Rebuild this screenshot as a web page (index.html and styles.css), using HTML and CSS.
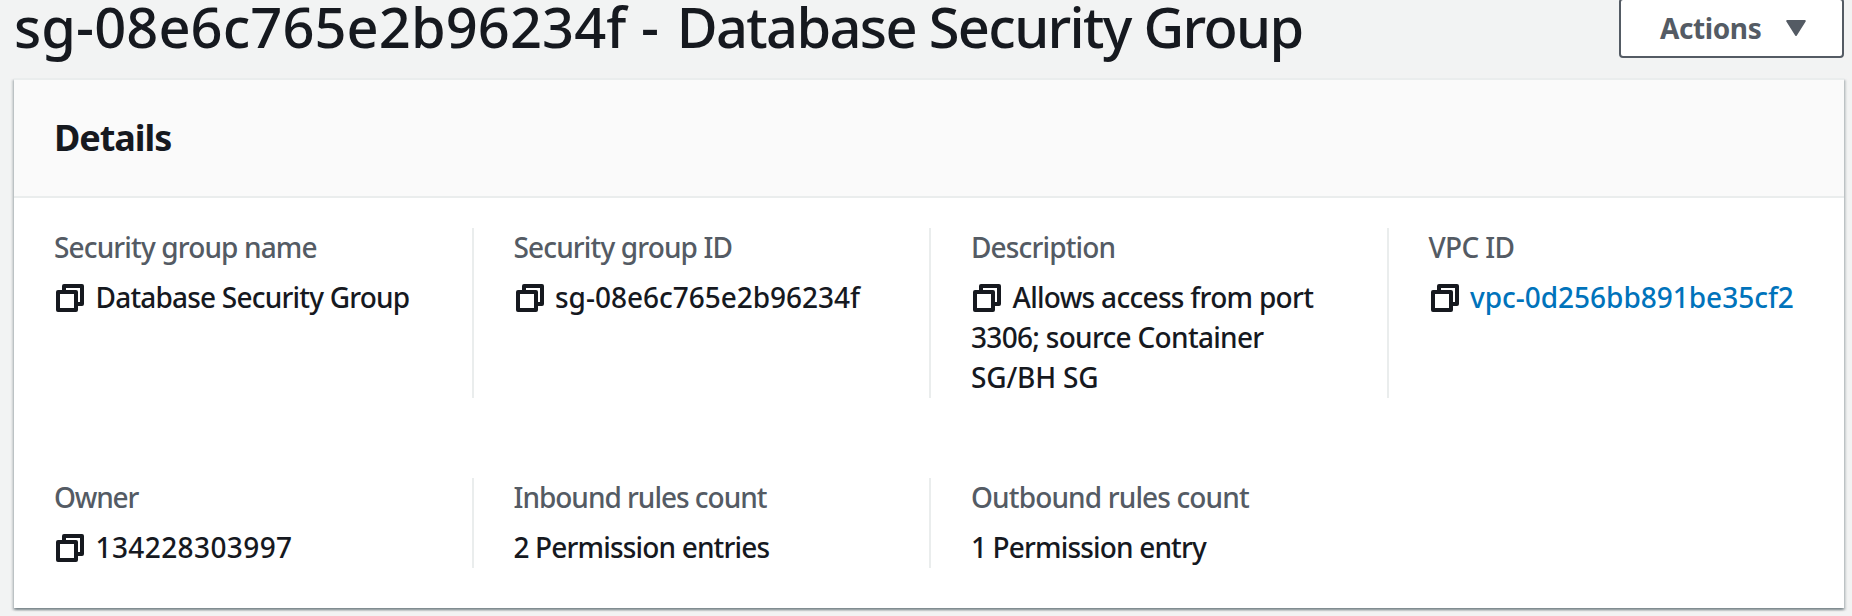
FILE: index.html
```html
<!DOCTYPE html>
<html lang="en">
<head>
<meta charset="utf-8">
<title>Database Security Group</title>
<link rel="stylesheet" href="styles.css">
</head>
<body>
<svg class="defs" width="0" height="0" aria-hidden="true">
  <symbol id="copy" viewBox="0 0 28 28">
    <path d="M8 6V2H26V20H22" fill="none" stroke="currentColor" stroke-width="4" stroke-linejoin="round"/>
    <rect x="2" y="8" width="18" height="18" fill="none" stroke="currentColor" stroke-width="4" stroke-linejoin="round"/>
  </symbol>
</svg>
<header class="top">
  <h1 class="title"><span class="title-id">sg-08e6c765e2b96234f - </span><span class="title-name">Database Security Group</span></h1>
  <button class="actions" type="button"><span>Actions</span><svg class="caret" width="20" height="16" viewBox="0 0 20 16"><path d="M1.2 1H18.8L10 15Z" fill="currentColor" stroke="currentColor" stroke-width="2" stroke-linejoin="round"/></svg></button>
</header>
<main class="card">
  <div class="card-head"><h2 class="card-title">Details</h2></div>
  <div class="fields">
    <div class="field"><div class="label">Security group name</div><div class="value t-name"><svg class="icon"><use href="#copy"/></svg>Database Security Group</div></div>
    <div class="field"><div class="label">Security group ID</div><div class="value t-id"><svg class="icon"><use href="#copy"/></svg>sg-08e6c765e2b96234f</div></div>
    <div class="field"><div class="label">Description</div><div class="value t-desc"><svg class="icon"><use href="#copy"/></svg>Allows access from port 3306; source Container <span class="t-caps">SG/BH SG</span></div></div>
    <div class="field"><div class="label t-vpc">VPC ID</div><div class="value t-id"><svg class="icon"><use href="#copy"/></svg><a class="link">vpc-0d256bb891be35cf2</a></div></div>
    <div class="field"><div class="label t-owner">Owner</div><div class="value t-num"><svg class="icon"><use href="#copy"/></svg>134228303997</div></div>
    <div class="field"><div class="label t-inbound">Inbound rules count</div><div class="value t-count">2 Permission entries</div></div>
    <div class="field"><div class="label">Outbound rules count</div><div class="value t-count">1 Permission entry</div></div>
  </div>
</main>
</body>
</html>
```
FILE: styles.css
```css
* { box-sizing: border-box; }
body {
  margin: 0;
  padding: 0 8px 0 14px;
  height: 616px;
  overflow: hidden;
  background: #f2f3f3;
  color: #16191f;
  font: 500 28px/40px "Noto Sans", "Open Sans", sans-serif;
}
.defs { display: block; }
.top {
  display: flex;
  justify-content: space-between;
  align-items: flex-start;
  height: 78px;
}
.title {
  margin: -12px 0 0;
  font-size: 56px;
  font-weight: 500;
  line-height: 76px;
  white-space: pre;
}
.title-id { letter-spacing: .08px; }
.title-name { margin-left: 3px; letter-spacing: -1.68px; }
.actions {
  display: flex;
  align-items: center;
  gap: 25px;
  width: 225px;
  height: 60px;
  margin-top: -2px;
  padding: 0 36px 0 39px;
  border: 2px solid #545b64;
  border-radius: 4px;
  background: #fff;
  color: #545b64;
  font: 700 28px/40px "Noto Sans", "Open Sans", sans-serif;
  letter-spacing: -.4px;
}
.caret { flex: none; }
.card {
  height: 530px;
  background: #fff;
  border-top: 2px solid #eaeded;
  box-shadow: 0 2px 2px 0 rgba(0,28,36,.3), 2px 2px 2px 0 rgba(0,28,36,.15), -2px 2px 2px 0 rgba(0,28,36,.15);
}
.card-head {
  height: 118px;
  padding: 33px 40px;
  border-bottom: 2px solid #eaeded;
  background: #fafafa;
}
.card-title {
  margin: 0;
  font-size: 36px;
  font-weight: 700;
  line-height: 50px;
  letter-spacing: -1.05px;
}
.fields {
  display: grid;
  grid-template-columns: repeat(4, 1fr);
  grid-template-rows: 170px 90px;
  row-gap: 80px;
  padding-top: 30px;
}
.field { padding: 0 40px; border-left: 2px solid #eaeded; }
.field:nth-child(4n+1) { border-left: 0; }
.label {
  margin: -1px 0 10px;
  color: #545b64;
  letter-spacing: -.86px;
}
.icon {
  width: 28px;
  height: 28px;
  margin: 0 11.5px 0 2px;
  vertical-align: -4px;
}
.t-vpc { letter-spacing: -.65px; }
.t-owner { letter-spacing: -1.2px; }
.t-inbound { letter-spacing: -1.02px; }
.t-name { letter-spacing: -.8px; }
.t-id { letter-spacing: -.02px; }
.t-desc { letter-spacing: -.7px; }
.t-caps { letter-spacing: -.18px; }
.t-num { letter-spacing: .4px; }
.t-count { letter-spacing: -.84px; }
.link { color: #0073bb; }
```
